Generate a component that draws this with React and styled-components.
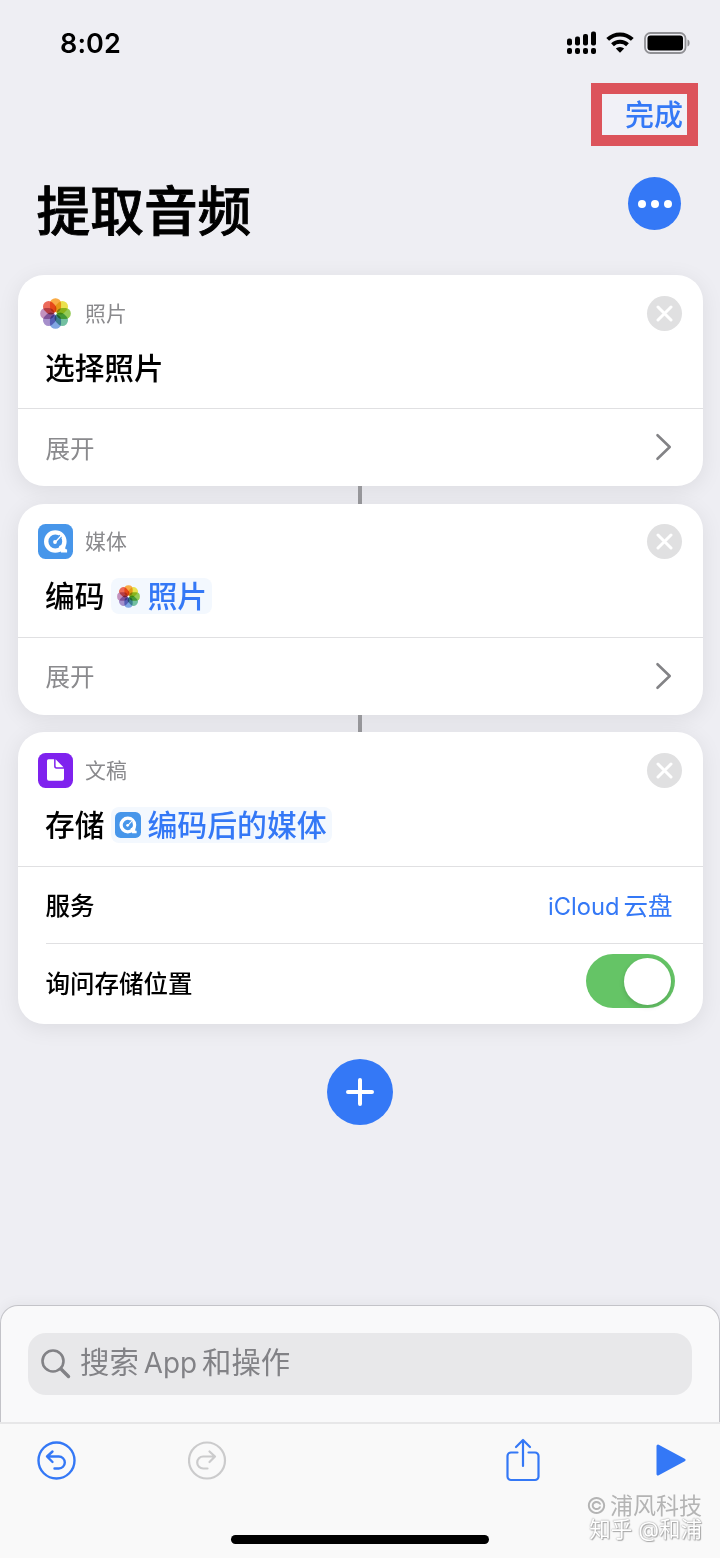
import React from "react";
import styled, { createGlobalStyle } from "styled-components";

const GlobalStyle = createGlobalStyle`
  * {
    box-sizing: border-box;
  }
  body {
    margin: 0;
    background-color: #eeeef3;
    font-family: Inter, "Noto Sans CJK SC", sans-serif;
    color: #000;
  }
  svg {
    display: block;
    flex-shrink: 0;
  }
`;

const Screen = styled.div`
  width: 720px;
  height: 1558px;
  display: flex;
  flex-direction: column;
  overflow: hidden;
  background-color: #eeeef3;
`;

const StatusBar = styled.div`
  height: 83px;
  padding: 2px 30px 0 60px;
  display: flex;
  align-items: center;
  justify-content: space-between;
`;

const Time = styled.span`
  font-size: 27px;
  font-weight: 600;
  letter-spacing: 0.1px;
  margin-top: 2px;
`;

const StatusIcons = styled.div`
  display: flex;
  align-items: center;
  gap: 10px;
`;

const NavBar = styled.div`
  display: flex;
  justify-content: flex-end;
  padding-right: 22px;
`;

const DoneButton = styled.button`
  width: 107px;
  height: 63px;
  border: 11.5px solid #dc535b;
  padding: 1px 4px 0 0;
  display: flex;
  align-items: center;
  justify-content: flex-end;
  background-color: #f1f1f7;
  color: #3478f6;
  font-family: inherit;
  font-size: 29px;
  font-weight: 500;
  line-height: 1;
`;

const TitleBar = styled.div`
  height: 129px;
  padding: 0 39px 13px 36.5px;
  display: flex;
  align-items: center;
  justify-content: space-between;
`;

const Title = styled.h1`
  margin: 15px 0 0;
  font-size: 53.7px;
  font-weight: 500;
  line-height: 60px;
  -webkit-text-stroke: 0.9px #000;
`;

const MoreButton = styled.button`
  width: 53px;
  height: 53px;
  margin-bottom: 1px;
  border: none;
  border-radius: 50%;
  padding: 0;
  display: flex;
  align-items: center;
  justify-content: center;
  gap: 5px;
  background-color: #3478f6;
`;

const Dot = styled.span`
  width: 8px;
  height: 8px;
  border-radius: 50%;
  background-color: #fff;
`;

const Actions = styled.div`
  padding: 0 17.5px;
  display: flex;
  flex-direction: column;
  align-items: center;
`;

const Card = styled.section`
  width: 100%;
  border-radius: 26px;
  background-color: #fff;
  box-shadow: 0 4px 22px rgba(0, 0, 0, 0.08);
`;

const Connector = styled.div`
  width: 4px;
  height: 17.6px;
  background-color: #98989c;
`;

const CardHead = styled.div`
  height: ${(props) => props.$height || 134}px;
  padding: 20.5px 20.5px 0;
  border-bottom: 1.5px solid #e0e0e2;
`;

const Meta = styled.div`
  height: 35px;
  display: flex;
  align-items: center;
`;

const AppName = styled.span`
  flex: 1;
  margin: 1px 0 0 12px;
  font-size: 20.9px;
  line-height: 30px;
  color: #8a8a8d;
`;

const Close = styled.span`
  width: 35px;
  height: 35px;
  border-radius: 50%;
  display: flex;
  align-items: center;
  justify-content: center;
  background-color: #e0e0e1;
`;

const ActionLine = styled.div`
  height: 36px;
  margin: 19px 0 0 7px;
  display: flex;
  align-items: center;
  font-size: 29.7px;
  font-weight: 500;
  line-height: 36px;
`;

const Token = styled.span`
  height: 36px;
  margin-left: 7px;
  padding: 0 5px 0 ${(props) => (props.$tight ? "4px" : "6px")};
  border-radius: 8px;
  display: flex;
  align-items: center;
  gap: ${(props) => (props.$tight ? "6px" : "7px")};
  background-color: #f3f8fe;
  font-size: 29.9px;
  color: #3478f6;
`;

const Row = styled.div`
  height: ${(props) => props.$height || 77}px;
  margin-left: 28px;
  padding: 0 30px ${(props) => props.$lift || 0}px 0;
  display: flex;
  align-items: center;
  justify-content: space-between;
  border-bottom: ${(props) => (props.$line ? "1.5px solid #e0e0e2" : "none")};
  font-size: 24.5px;
  font-weight: ${(props) => (props.$muted ? 400 : 500)};
  color: ${(props) => (props.$muted ? "#8a8a8d" : "#000")};
`;

const Value = styled.span`
  display: flex;
  align-items: baseline;
  gap: 4px;
  font-weight: 400;
  color: #3478f6;
`;

const Latin = styled.span`
  font-size: ${(props) => props.$size}px;
`;

const Switch = styled.span`
  width: 89px;
  height: 54px;
  margin: 0 -2px 2px 0;
  padding-right: 3.5px;
  border-radius: 27px;
  display: flex;
  align-items: center;
  justify-content: flex-end;
  background-color: #65c466;
`;

const Knob = styled.span`
  width: 47px;
  height: 47px;
  border-radius: 50%;
  background-color: #fff;
  box-shadow: 0 2px 5px rgba(0, 0, 0, 0.15);
`;

const AddButton = styled.button`
  width: 66px;
  height: 66px;
  margin-top: 35px;
  border: none;
  border-radius: 50%;
  padding: 0;
  display: flex;
  align-items: center;
  justify-content: center;
  background-color: #3478f6;
`;

const Drawer = styled.div`
  height: 117px;
  margin-top: auto;
  padding: 27px;
  border: 1px solid #c3c3c8;
  border-bottom: none;
  border-radius: 18px 18px 0 0;
  background-color: #f9f9fa;
  box-shadow: 0 -3px 12px rgba(0, 0, 0, 0.04);
`;

const Search = styled.div`
  height: 62px;
  padding: 0 13px 1px;
  border-radius: 18px;
  display: flex;
  align-items: center;
  background-color: #e8e8ea;
  color: #828286;
  font-size: 29.4px;
`;

const Placeholder = styled.span`
  margin: -1px 0 0 9px;
  line-height: 40px;
  display: flex;
  align-items: baseline;
  gap: 5px;
`;

const Toolbar = styled.div`
  height: 136px;
  padding: 13px 33px 0 37px;
  display: flex;
  align-items: flex-start;
  border-top: 2px solid #e7e7e8;
  background-color: #f9f9f9;
  position: relative;
`;

const Tool = styled.span`
  height: 46px;
  margin-left: ${(props) => props.$gap || 0}px;
  display: flex;
  align-items: center;
`;

const HomeIndicator = styled.div`
  position: absolute;
  left: 231px;
  bottom: 14px;
  width: 258px;
  height: 9px;
  border-radius: 5px;
  background-color: #000;
`;

const Watermark = styled.div`
  position: absolute;
  right: 18px;
  bottom: 17px;
  display: flex;
  flex-direction: column;
  align-items: flex-end;
  white-space: nowrap;
`;

const Copyright = styled.div`
  display: flex;
  gap: 3px;
  font-size: 23px;
  line-height: 23px;
  color: #b4b4b4;
`;

const WatermarkSite = styled.div`
  font-size: 21.5px;
  line-height: 23px;
  color: #fff;
  text-shadow: 0 0 1px #999, 1px 1px 1px #aaa, 0 0 2px #bbb;
`;

const petals = [
  "#f9a02c",
  "#e8dd35",
  "#86c440",
  "#5fb894",
  "#6f9be0",
  "#9a80c4",
  "#bb82b5",
  "#ea5544",
];

const PhotosIcon = ({ size }) => (
  <svg width={size} height={size} viewBox="0 0 30 30">
    <g style={{ isolation: "isolate" }}>
      {petals.map((fill, i) => (
        <rect
          key={fill}
          x="9.6"
          y="0.2"
          width="10.8"
          height="13.8"
          rx="5.2"
          fill={fill}
          opacity="0.88"
          transform={`rotate(${i * 45} 15 15)`}
          style={{ mixBlendMode: "multiply" }}
        />
      ))}
    </g>
    <circle cx="15" cy="15" r="1.1" fill="#fff" />
  </svg>
);

const MediaIcon = ({ size }) => (
  <svg width={size} height={size} viewBox="0 0 35 35">
    <rect width="35" height="35" rx="7.5" fill="#4796ea" />
    <circle cx="17.3" cy="17.5" r="9.1" fill="none" stroke="#fff" strokeWidth="4.4" />
    <path d="M21 22l6.300-2.500v5.600l1.800.3v3.200H23z" fill="#fff" />
    <path d="M18.500 16.500l4.200-4.400" stroke="#4796ea" strokeWidth="3.600" />
    <path d="M16 18.500l7.400-8 .9.900-7.300 8z" fill="#fff" />
    <circle cx="17" cy="18" r="1.9" fill="#fff" />
  </svg>
);

const FileIcon = () => (
  <svg width="35" height="35" viewBox="0 0 35 35">
    <rect width="35" height="35" rx="7.5" fill="#7f22ee" />
    <path
      d="M10.500 6.200h5.600v7.100c0 1.500.8 2.400 2.400 2.400h7.500v10.100a2 2 0 0 1-2 2H11a2 2 0 0 1-2-2V7.700a1.500 1.500 0 0 1 1.500-1.500z"
      fill="#fff"
    />
    <path d="M17.600 6.300l7.900 7.900h-6.700a1.200 1.200 0 0 1-1.200-1.200z" fill="#fff" />
  </svg>
);

const Chevron = () => (
  <svg width="18" height="28" viewBox="0 0 18 28">
    <path
      d="M2.500 2.200l12.200 11.800L2.500 25.800"
      fill="none"
      stroke="#838386"
      strokeWidth="2.6"
      strokeLinecap="round"
      strokeLinejoin="round"
    />
  </svg>
);

const ActionHead = ({ icon, app, title, height, children }) => (
  <CardHead $height={height}>
    <Meta>
      {icon}
      <AppName>{app}</AppName>
      <Close>
        <svg width="17" height="17" viewBox="0 0 17 17">
          <path d="M2 2l13 13M15 2L2 15" stroke="#fff" strokeWidth="3" strokeLinecap="round" />
        </svg>
      </Close>
    </Meta>
    <ActionLine>
      <span>{title}</span>
      {children}
    </ActionLine>
  </CardHead>
);

const PhotosBadge = styled.span`
  width: 35px;
  display: flex;
  justify-content: center;
`;

const Signal = () => (
  <svg width="29" height="24" viewBox="0 0 29 24">
    <rect x="0" y="7.5" width="5" height="7" rx="2" />
    <rect x="8" y="5.5" width="5" height="9" rx="2" />
    <rect x="16" y="3" width="5" height="11.5" rx="2" />
    <rect x="24" y="0.5" width="5" height="14" rx="2" />
    {[0, 8, 16, 24].map((x) => (
      <rect key={x} x={x} y="17" width="5" height="6" rx="2" />
    ))}
  </svg>
);

const Wifi = () => (
  <svg width="28" height="21" viewBox="0 0 28 21">
    <g fill="none" stroke="#000" strokeWidth="4">
      <path d="M1.700 7.400a17.600 17.600 0 0 1 24.600 0" />
      <path d="M6.500 12.700a10.800 10.800 0 0 1 15 0" />
    </g>
    <path d="M14 20.800l-4.200-4.200a6 6 0 0 1 8.400 0z" />
  </svg>
);

const Battery = () => (
  <svg width="46" height="22" viewBox="0 0 46 22">
    <rect x="1" y="1" width="40.5" height="20" rx="5.5" fill="none" stroke="#909094" strokeWidth="1.8" />
    <rect x="3.5" y="3.5" width="35.5" height="15" rx="3" />
    <path d="M43.500 7.500c2.800.8 2.800 6.200 0 7z" fill="#909094" />
  </svg>
);

const App = () => {
  return (
    <Screen>
      <GlobalStyle />
      <StatusBar>
        <Time>8:02</Time>
        <StatusIcons>
          <Signal />
          <Wifi />
          <Battery />
        </StatusIcons>
      </StatusBar>
      <NavBar>
        <DoneButton>完成</DoneButton>
      </NavBar>
      <TitleBar>
        <Title>提取音频</Title>
        <MoreButton>
          <Dot />
          <Dot />
          <Dot />
        </MoreButton>
      </TitleBar>

      <Actions>
        <Card>
          <ActionHead
            app="照片"
            title="选择照片"
            icon={
              <PhotosBadge>
                <PhotosIcon size={31} />
              </PhotosBadge>
            }
          />
          <Row $muted $lift={1}>
            展开
            <Chevron />
          </Row>
        </Card>
        <Connector />
        <Card>
          <ActionHead app="媒体" title="编码" icon={<MediaIcon size={35} />}>
            <Token>
              <PhotosIcon size={23} />
              照片
            </Token>
          </ActionHead>
          <Row $muted $lift={1}>
            展开
            <Chevron />
          </Row>
        </Card>
        <Connector />
        <Card>
          <ActionHead app="文稿" title="存储" height={135} icon={<FileIcon />}>
            <Token $tight>
              <MediaIcon size={26} />
              编码后的媒体
            </Token>
          </ActionHead>
          <Row $line $lift={1}>
            服务
            <Value>
              <Latin $size={23.7}>iCloud</Latin>
              <span>云盘</span>
            </Value>
          </Row>
          <Row $height={80} $lift={4}>
            询问存储位置
            <Switch>
              <Knob />
            </Switch>
          </Row>
        </Card>
        <AddButton>
          <svg width="28" height="28" viewBox="0 0 28 28">
            <path d="M14 2v24M2 14h24" stroke="#fff" strokeWidth="4" strokeLinecap="round" />
          </svg>
        </AddButton>
      </Actions>

      <Drawer>
        <Search>
          <svg width="30" height="30" viewBox="0 0 30 30" fill="none" stroke="#828286" strokeLinecap="round">
            <circle cx="12" cy="12" r="10.5" strokeWidth="2.6" />
            <path d="M20 20l7.500 7.500" strokeWidth="3.400" />
          </svg>
          <Placeholder>
            <span>搜索</span>
            <Latin $size={27.8}>App</Latin>
            <span>和操作</span>
          </Placeholder>
        </Search>
      </Drawer>
      <Toolbar>
        <Tool>
          <svg width="39" height="39" viewBox="0 0 39 39" fill="none" stroke="#3478f6" strokeWidth="2.4" strokeLinecap="round" strokeLinejoin="round">
            <circle cx="19.5" cy="19.5" r="18" />
            <path d="M15.500 10.500L10 15.500l5.500 5.500M10.500 15.500h11.300a6 6 0 0 1 0 12H17.500" />
          </svg>
        </Tool>
        <Tool $gap={112}>
          <svg width="39" height="39" viewBox="0 0 39 39" fill="none" stroke="#cbcbcc" strokeWidth="2.2" strokeLinecap="round" strokeLinejoin="round">
            <circle cx="19" cy="19.5" r="18" />
            <path d="M21.500 10.500L27 15.500l-5.500 5.500M26.500 15.500H15.200a6 6 0 0 0 0 12H19.500" />
          </svg>
        </Tool>
        <Tool $gap={279}>
          <svg width="34" height="44" viewBox="0 0 34 44" fill="none" stroke="#3478f6" strokeWidth="2.2" strokeLinecap="round" strokeLinejoin="round">
            <path d="M11.500 14.500H5a3.500 3.500 0 0 0-3.500 3.500v20.500A3.500 3.500 0 0 0 5 42h24a3.500 3.500 0 0 0 3.500-3.500V18a3.500 3.500 0 0 0-3.500-3.500h-6.500" />
            <path d="M17 28V2M10 9l7-7 7 7" />
          </svg>
        </Tool>
        <Tool $gap={116}>
          <svg width="30" height="34" viewBox="0 0 30 34">
            <path
              d="M2 3l26 14L2 31z"
              fill="#3478f6"
              stroke="#3478f6"
              strokeWidth="3"
              strokeLinejoin="round"
            />
          </svg>
        </Tool>
        <HomeIndicator />
        <Watermark>
          <Copyright>
            <span>©</span>
            <span>浦风科技</span>
          </Copyright>
          <WatermarkSite>知乎 @和浦</WatermarkSite>
        </Watermark>
      </Toolbar>
    </Screen>
  );
};

export default App;
